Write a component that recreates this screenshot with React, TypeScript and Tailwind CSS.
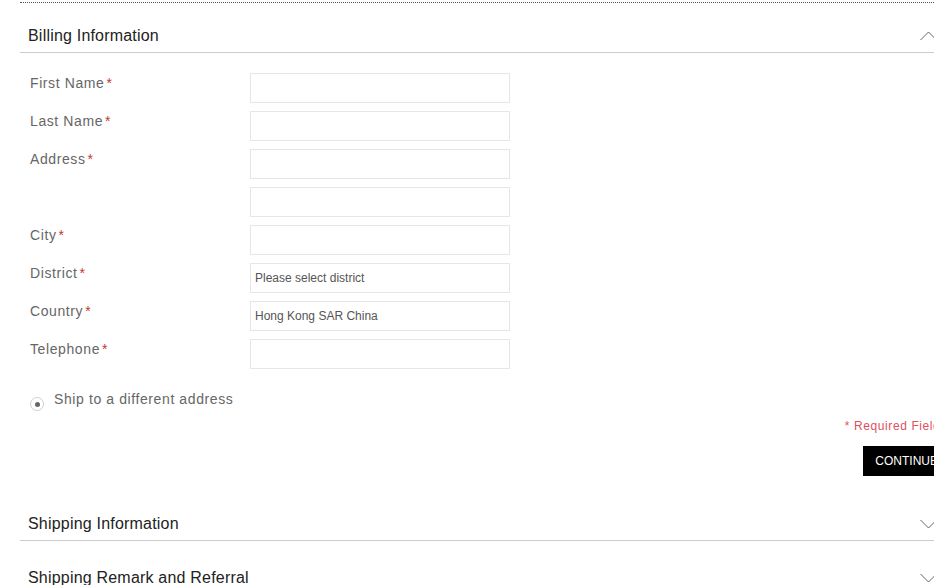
import React from 'react';

const fields = [
  { label: 'First Name', value: '' },
  { label: 'Last Name', value: '' },
  { label: 'Address', value: '' },
  { label: '', value: '' },
  { label: 'City', value: '' },
  { label: 'District', value: 'Please select district' },
  { label: 'Country', value: 'Hong Kong SAR China' },
  { label: 'Telephone', value: '' },
];

function Chevron({ up }: { up?: boolean }) {
  return (
    <svg width="17" height="10" viewBox="0 0 17 10" className="shrink-0">
      <polyline
        points={up ? '0.5,9 8.5,1 16.5,9' : '0.5,1 8.5,9 16.5,1'}
        fill="none"
        stroke="#666"
        strokeWidth="1"
      />
    </svg>
  );
}

function SectionHeader({ title, up, topPad }: { title: string; up?: boolean; topPad: string }) {
  return (
    <div className={`flex items-center justify-between pl-2 pr-[13px] pb-[6px] border-b border-[#cccccc] ${topPad}`}>
      <span className="text-[16px] leading-[20px] tracking-[0.2px] text-[#222]">{title}</span>
      <Chevron up={up} />
    </div>
  );
}

export default function App() {
  return (
    <div className="w-[934px] h-[585px] overflow-hidden bg-white" style={{ fontFamily: '"Liberation Sans", Arial, sans-serif' }}>
      <div className="ml-[20px] w-[930px] mt-[2px] border-t border-dotted border-[#555]">
        <SectionHeader title="Billing Information" up topPad="pt-[23px]" />

        <div className="pl-[10px] pt-[20px]">
          <div className="flex flex-col gap-[8px]">
            {fields.map((f, i) => (
              <div key={i} className="flex">
                <div className="w-[220px] pt-[2px] text-[14px] leading-[16px] tracking-[0.6px] text-[#666]">
                  {f.label && (
                    <>
                      {f.label}
                      <span className="text-[#c0392b] ml-[2px]">*</span>
                    </>
                  )}
                </div>
                <div className="w-[260px] h-[30px] border border-[#e6e6e6] flex items-center px-[4px] text-[12px] text-[#555]">
                  {f.value}
                </div>
              </div>
            ))}
          </div>

          <div className="mt-[22px] flex items-start h-[20px]">
            <span className="mt-[6px] w-[14px] h-[14px] rounded-full border border-[#d0d0d0] flex items-center justify-center">
              <span className="w-[5px] h-[5px] rounded-full bg-[#666]" />
            </span>
            <span className="ml-[10px] text-[14px] leading-[16px] tracking-[0.6px] text-[#666]">Ship to a different address</span>
          </div>

          <div className="mt-[8px] flex justify-end text-[12px] leading-[14px] tracking-[0.6px] text-[#e0505e] pr-[3px]">
            * Required Fields
          </div>

          <div className="mt-[13px] flex justify-end">
            <button className="h-[30px] px-[12px] bg-black text-white text-[12px] tracking-[0px]">CONTINUE</button>
          </div>
        </div>

        <div className="mt-[15px]">
          <SectionHeader title="Shipping Information" topPad="pt-[23px]" />
        </div>
        <SectionHeader title="Shipping Remark and Referral" topPad="pt-[27px]" />
      </div>
    </div>
  );
}
